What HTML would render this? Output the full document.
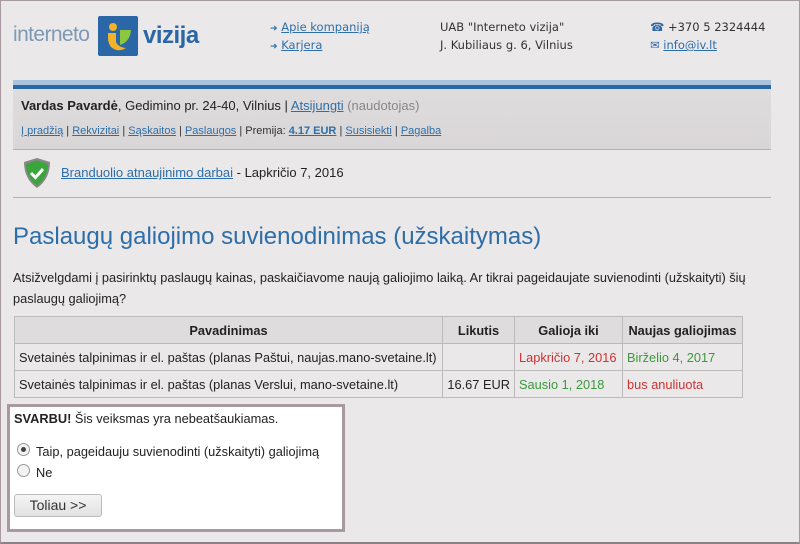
<!DOCTYPE html>
<html><head><meta charset="utf-8"><style>
*{margin:0;padding:0;box-sizing:border-box}
body{width:800px;height:544px;background:#ebe8e9;font-family:"Liberation Sans",Arial,sans-serif;color:#222;position:relative;overflow:hidden;font-size:13px}
.frame{position:absolute;left:0;top:0;width:800px;height:544px;border:1px solid #a7999f;border-bottom:2px solid #8e8088;pointer-events:none}
.a{position:absolute;white-space:nowrap}
a{color:#2e6ea8;text-decoration:underline}
.dv{font-family:"DejaVu Sans",sans-serif;font-size:11.5px;color:#333}
table{border-collapse:collapse;position:absolute;left:14px;top:316px;font-size:12.8px;table-layout:fixed;width:728px}
td,th{border:1px solid #bbb;height:27px;padding:0 4px;white-space:nowrap;overflow:hidden}
th{background:#dedcdd;font-weight:bold;text-align:center}
td{background:#ebe8e9}
.r{color:#cc3333}.g{color:#3a9a3a}
</style></head><body>
<div class="a" style="left:13px;top:23px;font-size:21px;color:#7d99b5;letter-spacing:-0.6px">interneto</div>
<svg class="a" style="left:98px;top:16px" width="40" height="40" viewBox="0 0 40 40">
<rect width="40" height="40" rx="2" fill="#2b66a6"/>
<circle cx="15" cy="11" r="4" fill="#f2b32b"/>
<path d="M10 17 L18 17 L18 26 Q20 31 28 32 Q20 37 13 31 Q10 27 10 22Z" fill="#f2b32b"/>
<path d="M22 14 L33 14 Q32 26 22 29Z" fill="#8dc63f"/>
</svg>
<div class="a" style="left:143px;top:22px;font-size:24px;font-weight:bold;color:#2b66a6;letter-spacing:-0.5px">vizija</div>
<div class="a dv" style="left:270px;top:20px;color:#2e6ea8"><span style="font-size:9px">➜</span> <a>Apie kompaniją</a></div>
<div class="a dv" style="left:270px;top:38px;color:#2e6ea8"><span style="font-size:9px">➜</span> <a>Karjera</a></div>
<div class="a dv" style="left:440px;top:20px">UAB "Interneto vizija"</div>
<div class="a dv" style="left:440px;top:38px">J. Kubiliaus g. 6, Vilnius</div>
<div class="a dv" style="left:650px;top:20px"><span style="color:#2b66a6">☎</span> +370 5 2324444</div>
<div class="a dv" style="left:650px;top:38px"><span style="color:#2b66a6">✉</span> <a>info@iv.lt</a></div>
<div class="a" style="left:13px;top:80px;width:758px;height:5px;background:#a8c3da"></div>
<div class="a" style="left:13px;top:85px;width:758px;height:4px;background:#2b66a6"></div>
<div class="a" style="left:13px;top:89px;width:758px;height:61px;background:linear-gradient(#dedcdd,#d9d6d7);border-bottom:1px solid #b5b2b3"></div>
<div class="a" style="left:21px;top:98px;font-size:13px"><b>Vardas Pavardė</b>, Gedimino pr. 24-40, Vilnius | <a>Atsijungti</a> <span style="color:#888">(naudotojas)</span></div>
<div class="a" style="left:21px;top:125px;font-size:11px;color:#333"><a>Į pradžią</a> | <a>Rekvizitai</a> | <a>Sąskaitos</a> | <a>Paslaugos</a> | Premija: <a><b>4.17 EUR</b></a> | <a>Susisiekti</a> | <a>Pagalba</a></div>
<svg class="a" style="left:22px;top:157px" width="30" height="32" viewBox="0 0 30 32">
<path d="M15 1 L28 5 Q28 22 15 31 Q2 22 2 5Z" fill="#888"/>
<path d="M15 3.5 L26 7 Q25.5 21 15 28.5 Q4.5 21 4 7Z" fill="#3aa53a"/>
<path d="M9 16 L13.5 20.5 L21 12" stroke="#fff" stroke-width="3" fill="none"/>
</svg>
<div class="a" style="left:61px;top:165px;font-size:13px"><a>Branduolio atnaujinimo darbai</a> - Lapkričio 7, 2016</div>
<div class="a" style="left:13px;top:197px;width:758px;height:1px;background:#b5b2b3"></div>
<div class="a" style="left:13px;top:223px;font-size:24px;color:#2e6ea8">Paslaugų galiojimo suvienodinimas (užskaitymas)</div>
<div class="a" style="left:13px;top:267px;font-size:12.8px;line-height:21px;white-space:normal;width:750px">Atsižvelgdami į pasirinktų paslaugų kainas, paskaičiavome naują galiojimo laiką. Ar tikrai pageidaujate suvienodinti (užskaityti) šių paslaugų galiojimą?</div>
<table>
<colgroup><col style="width:428px"><col style="width:72px"><col style="width:108px"><col style="width:120px"></colgroup>
<tr><th>Pavadinimas</th><th>Likutis</th><th>Galioja iki</th><th>Naujas galiojimas</th></tr>
<tr><td>Svetainės talpinimas ir el. paštas (planas Paštui, naujas.mano-svetaine.lt)</td><td></td><td class="r">Lapkričio 7, 2016</td><td class="g">Birželio 4, 2017</td></tr>
<tr><td>Svetainės talpinimas ir el. paštas (planas Verslui, mano-svetaine.lt)</td><td style="text-align:right">16.67 EUR</td><td class="g">Sausio 1, 2018</td><td class="r">bus anuliuota</td></tr>
</table>
<div class="a" style="left:7px;top:404px;width:338px;height:128px;background:#fff;border:3px solid #a7999f"></div>
<div class="a" style="left:14px;top:411px;font-size:12.8px"><b>SVARBU!</b> Šis veiksmas yra nebeatšaukiamas.</div>
<div class="a" style="left:17px;top:443px;width:13px;height:13px;border:1px solid #999;border-radius:50%;background:#f3f3f3"><div style="width:5px;height:5px;background:#444;border-radius:50%;margin:3px"></div></div>
<div class="a" style="left:36px;top:444px;font-size:12.8px">Taip, pageidauju suvienodinti (užskaityti) galiojimą</div>
<div class="a" style="left:17px;top:464px;width:13px;height:13px;border:1px solid #999;border-radius:50%;background:#f3f3f3"></div>
<div class="a" style="left:36px;top:465px;font-size:12.8px">Ne</div>
<div class="a" style="left:14px;top:494px;width:88px;height:23px;border:1px solid #bbb;border-radius:3px;background:linear-gradient(#f4f4f4,#e2e2e2);font-size:14px;text-align:center;line-height:21px;color:#333">Toliau &gt;&gt;</div>
<div class="frame"></div>
</body></html>
